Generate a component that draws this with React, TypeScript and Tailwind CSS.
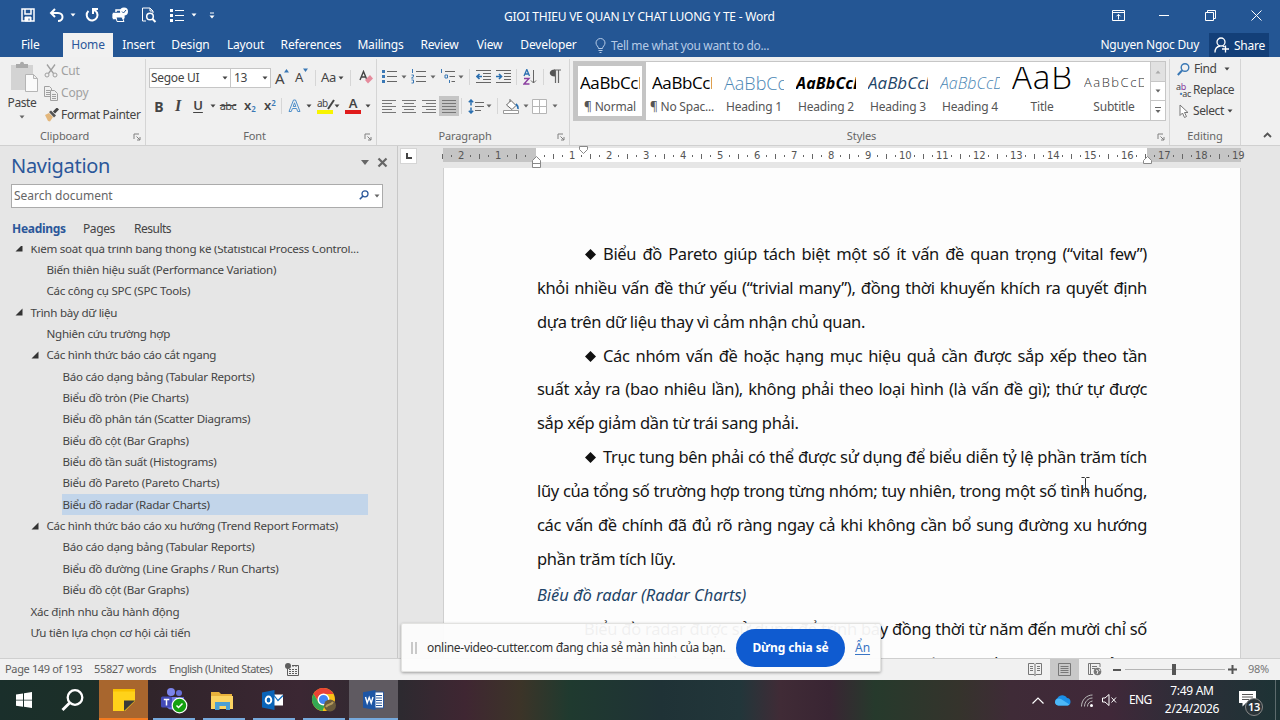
import type { ReactNode } from "react";
import clsx from "clsx";

const TABS = [
  { label: "Insert", cls: "w-[51px]" },
  { label: "Design", cls: "w-[53px]" },
  { label: "Layout", cls: "w-[57px]" },
  { label: "References", cls: "w-[74px]" },
  { label: "Mailings", cls: "w-[65px]" },
  { label: "Review", cls: "w-[53px]" },
  { label: "View", cls: "w-[47px]" },
  { label: "Developer", cls: "w-[71px]" },
];

const STYLES = [
  { label: "¶ Normal", sample: "AaBbCcDd", cls: "text-[17px] text-black tracking-[-0.4px]", active: true },
  { label: "¶ No Spac...", sample: "AaBbCcDd", cls: "text-[17px] text-black tracking-[-0.4px]" },
  { label: "Heading 1", sample: "AaBbCc", cls: "text-[18px] font-light text-[#4a86b4]" },
  { label: "Heading 2", sample: "AaBbCcD", cls: "text-[16px] font-bold italic text-black tracking-[0.1px]" },
  { label: "Heading 3", sample: "AaBbCcD", cls: "text-[17px] italic text-[#1f4568]" },
  { label: "Heading 4", sample: "AaBbCcDd", cls: "text-[16px] font-light italic text-[#4a86b4]" },
  { label: "Title", sample: "AaB", cls: "relative -top-[6px] text-[33px] font-light text-black leading-[36px] tracking-[1px]" },
  { label: "Subtitle", sample: "AaBbCcDd", cls: "text-[13px] font-light text-[#303030] tracking-[1.5px]" },
];

type Heading = { text: string; level: 1 | 2 | 3; open?: boolean; selected?: boolean };

const HEADINGS: Heading[] = [
  { text: "Kiểm soát quá trình bằng thống kê (Statistical Process Control...", level: 1, open: true },
  { text: "Biến thiên hiệu suất (Performance Variation)", level: 2 },
  { text: "Các công cụ SPC (SPC Tools)", level: 2 },
  { text: "Trình bày dữ liệu", level: 1, open: true },
  { text: "Nghiên cứu trường hợp", level: 2 },
  { text: "Các hình thức báo cáo cắt ngang", level: 2, open: true },
  { text: "Báo cáo dạng bảng (Tabular Reports)", level: 3 },
  { text: "Biểu đồ tròn (Pie Charts)", level: 3 },
  { text: "Biểu đồ phân tán (Scatter Diagrams)", level: 3 },
  { text: "Biểu đồ cột (Bar Graphs)", level: 3 },
  { text: "Biểu đồ tần suất (Histograms)", level: 3 },
  { text: "Biểu đồ Pareto (Pareto Charts)", level: 3 },
  { text: "Biểu đồ radar (Radar Charts)", level: 3, selected: true },
  { text: "Các hình thức báo cáo xu hướng (Trend Report Formats)", level: 2, open: true },
  { text: "Báo cáo dạng bảng (Tabular Reports)", level: 3 },
  { text: "Biểu đồ đường (Line Graphs / Run Charts)", level: 3 },
  { text: "Biểu đồ cột (Bar Graphs)", level: 3 },
  { text: "Xác định nhu cầu hành động", level: 1 },
  { text: "Ưu tiên lựa chọn cơ hội cải tiến", level: 1 },
];

const LINES = [
  { text: "Biểu đồ Pareto giúp tách biệt một số ít vấn đề quan trọng (“vital few”)", bullet: true, full: true },
  { text: "khỏi nhiều vấn đề thứ yếu (“trivial many”), đồng thời khuyến khích ra quyết định", full: true },
  { text: "dựa trên dữ liệu thay vì cảm nhận chủ quan." },
  { text: "Các nhóm vấn đề hoặc hạng mục hiệu quả cần được sắp xếp theo tần", bullet: true, full: true },
  { text: "suất xảy ra (bao nhiêu lần), không phải theo loại hình (là vấn đề gì); thứ tự được", full: true },
  { text: "sắp xếp giảm dần từ trái sang phải." },
  { text: "Trục tung bên phải có thể được sử dụng để biểu diễn tỷ lệ phần trăm tích", bullet: true, full: true },
  { text: "lũy của tổng số trường hợp trong từng nhóm; tuy nhiên, trong một số tình huống,", full: true },
  { text: "các vấn đề chính đã đủ rõ ràng ngay cả khi không cần bổ sung đường xu hướng", full: true },
  { text: "phần trăm tích lũy." },
];

function Icon({ w = 16, h = 16, className, children }: { w?: number; h?: number; className?: string; children: ReactNode }) {
  return (
    <svg width={w} height={h} viewBox={`0 0 ${w} ${h}`} fill="none" stroke="currentColor" className={clsx("shrink-0", className)}>
      {children}
    </svg>
  );
}

function Caret({ className }: { className?: string }) {
  return (
    <Icon w={6} h={4} className={className}>
      <path d="M0.5 0.5h5L3 3.5z" fill="currentColor" stroke="none" />
    </Icon>
  );
}

function Sep({ className }: { className?: string }) {
  return <div className={clsx("h-4 w-px shrink-0 bg-[#d6d6d6]", className)} />;
}

function Launcher() {
  return (
    <Icon w={8} h={8} className="text-[#808080]">
      <path d="M1 6V1h5M3.5 3.5L7 7M7 4v3H4" />
    </Icon>
  );
}

function Group({ label, className, launcher, children }: { label: string; className: string; launcher?: boolean; children: ReactNode }) {
  return (
    <section className={clsx("relative flex h-[86px] shrink-0 flex-col border-r border-[#d5d5d5]", className)}>
      <div className="h-[68px]">{children}</div>
      <div className="text-center text-[11px] leading-[18px] tracking-[-0.1px] text-[#666]">{label}</div>
      {launcher && (
        <div className="absolute right-[4px] bottom-[4px]">
          <Launcher />
        </div>
      )}
    </section>
  );
}

function TitleBar() {
  return (
    <header className="flex h-[33px] items-center pb-[3px] text-white">
      <div className="flex w-[230px] shrink-0 items-center pl-[21px]">
        <Icon w={14} h={14}>
          <path d="M1 1h12v12H1zM4 1v5h6V1" strokeWidth="1.5" />
          <path d="M4 9h6v4H4z" fill="currentColor" />
          <path d="M8 10.5v2" stroke="#245694" />
        </Icon>
        <Icon w={16} h={14} className="ml-[14px]">
          <path d="M6 1L2 5l4 4M2 5h7c6 0 6 8 0 8" strokeWidth="2" />
        </Icon>
        <Caret className="ml-[5px]" />
        <Icon w={16} h={16} className="ml-[8px]">
          <path d="M4.5 4a5.4 5.4 0 1 0 5-1.2M9 7V2h5" strokeWidth="2" />
        </Icon>
        <Icon w={17} h={16} className="ml-[12px]">
          <path d="M4 5V3h5M1.500 6.500h10v5h-10z" strokeWidth="1.5" />
          <path d="M1 7h11v4H1z" fill="currentColor" />
          <path d="M4 10h6l2 4.500H5z" fill="#245694" />
          <circle cx="12" cy="4.500" r="4" fill="currentColor" stroke="none" />
          <path d="M10 4.500l1.500 1.500L14 3" stroke="#245694" />
        </Icon>
        <Icon w={16} h={16} className="ml-[12px]">
          <path d="M5 14H1.500V1H9l3 3v2M9 1v3h3" />
          <circle cx="9" cy="9.500" r="3.300" strokeWidth="1.500" />
          <path d="M11.500 12l3 3" strokeWidth="2" />
        </Icon>
        <Icon w={16} h={15} className="ml-[12px]">
          <path d="M1 2.500h3M1 7.500h3M1 12.500h3" strokeWidth="3" />
          <path d="M6 2.500h9M6 7.500h9M6 12.500h9" />
        </Icon>
        <Caret className="ml-[6px]" />
        <Icon w={6} h={7} className="ml-[12px]">
          <path d="M1 1h4" />
          <path d="M.5 3.500h5L3 6.500z" fill="currentColor" stroke="none" />
        </Icon>
      </div>
      <div className="mt-[3px] ml-[274px] w-[275px] shrink-0 text-[12px] tracking-[-0.22px] whitespace-nowrap">
        GIOI THIEU VE QUAN LY CHAT LUONG Y TE - Word
      </div>
      <div className="ml-auto flex items-center pr-[18px]">
        <Icon w={13} h={11}>
          <path d="M.5.5h12v10H.5zM.5 2.500h12M6.500 9.500V4.500M4.500 6.300l2-2 2 2" />
        </Icon>
        <Icon w={10} h={10} className="ml-[34px]">
          <path d="M0 5.500h10" />
        </Icon>
        <Icon w={11} h={11} className="ml-[36px]">
          <path d="M.5 2.500h8v8h-8zM2.500 2.500v-2h8v8h-2" />
        </Icon>
        <Icon w={11} h={11} className="ml-[35px]">
          <path d="M.5.5l10 10M10.500.5l-10 10" />
        </Icon>
      </div>
    </header>
  );
}

function TabBar() {
  return (
    <nav className="flex h-6 text-[12px] leading-[23px] tracking-[-0.15px] text-white">
      <div className="w-[63px] pl-[21px]">File</div>
      <div className="w-[50px] bg-[#f1f1f1] text-center text-[#2b579a]">Home</div>
      <div className="flex">
        {TABS.map((t) => (
          <div key={t.label} className={clsx("text-center", t.cls)}>
            {t.label}
          </div>
        ))}
      </div>
      <div className="ml-[11px] flex items-center gap-[5px] text-[#b5cae6]">
        <Icon w={11} h={15}>
          <path d="M3.500 10.500C3.500 8.500 1 7.500 1 5a4.500 4.500 0 0 1 9 0c0 2.500-2.500 3.500-2.500 5.500zM3.500 12.500h4M4.500 14.500h2" />
        </Icon>
        <span className="tracking-[-0.33px]">Tell me what you want to do...</span>
      </div>
      <div className="ml-auto pr-[10px] tracking-[-0.25px]">Nguyen Ngoc Duy</div>
      <div className="mr-[11px] flex w-[60px] items-center gap-[4px] bg-[#133f78] pl-[5px] tracking-[-0.25px]">
        <Icon w={16} h={16}>
          <circle cx="7" cy="5" r="4" strokeWidth="1.300" />
          <path d="M1 15.500c0-4 2-6 5-6.500M8.500 9c1 .2 1.500.5 2 1M11.500 8.500v7M8 12h7" strokeWidth="1.300" />
        </Icon>
        Share
      </div>
    </nav>
  );
}

function AlignIcon({ rows }: { rows: [number, number][] }) {
  return (
    <Icon w={15} h={15} className="text-[#777]">
      {rows.map(([x, len], i) => (
        <path key={i} d={`M${x} ${i * 3 + 1.5}h${len}`} />
      ))}
    </Icon>
  );
}

function ClipboardGroup() {
  return (
    <Group label="Clipboard" className="w-[146px] pr-[16px]" launcher>
      <div className="flex pt-[2px]">
        <div className="flex w-[44px] shrink-0 flex-col items-center">
          <Icon w={30} h={34} className="ml-[4px]">
            <path d="M2 4h22v25H2z" fill="#d3d3d3" stroke="none" />
            <path d="M7 3h4c0-3 4-3 4 0h4v4H7z" fill="#aaa" stroke="none" />
            <path d="M16.500 13.500h8l4 4v13h-12zM24.500 13.500v4h4" fill="#fafafa" stroke="#b5b5b5" />
          </Icon>
          <span className="text-[12px] leading-[16px] tracking-[-0.4px] text-[#444]">Paste</span>
          <Caret className="mt-[4px] text-[#666]" />
        </div>
        <div className="flex flex-col gap-[2px] text-[12px] leading-[20px] whitespace-nowrap text-[#a0a0a0]">
          <div className="flex items-center gap-[3px] tracking-[-0.3px]">
            <Icon w={14} h={14}>
              <path d="M3 .5l6.500 9M11 .5l-6.500 9" strokeWidth="1.300" />
              <circle cx="3" cy="11" r="2" />
              <circle cx="11" cy="11" r="2" />
            </Icon>
            Cut
          </div>
          <div className="flex items-center gap-[3px] tracking-[-0.2px]">
            <Icon w={14} h={15}>
              <path d="M.5.5h5l2 2v8h-7zM2 4.500h4M2 6.500h4M2 8.500h4" />
              <path d="M6.500 4.500h4l3 3v7h-7z" fill="#eee" />
              <path d="M8 8.500h4M8 10.500h4M8 12.500h4" />
            </Icon>
            Copy
          </div>
          <div className="flex items-center gap-[2px] text-[#444]">
            <Icon w={15} h={14}>
              <path d="M1 7l4-2 4 4-3 4.500-2-.5z" fill="#e3b77c" stroke="none" />
              <path d="M5 4l2-1.500 5 5L10 9.500z" fill="#555" stroke="none" />
              <path d="M10 4.500l4-4" strokeWidth="3" />
            </Icon>
            <span className="tracking-[-0.35px]">Format Painter</span>
          </div>
        </div>
      </div>
    </Group>
  );
}

function FontGroup() {
  return (
    <Group label="Font" className="w-[231px] pl-[3px] pr-[16px]" launcher>
      <div className="-mr-4 flex flex-col text-[#444]">
        <div className="mt-[8px] flex h-[21px] items-center">
          <div className="flex h-[20px] w-[82px] shrink-0 items-center justify-between border border-[#c6c6c6] bg-white pr-[2px] pl-px text-[12px] tracking-[-0.3px]">
            Segoe UI
            <Caret />
          </div>
          <div className="-ml-px flex h-[20px] w-[41px] shrink-0 items-center justify-between border border-[#c6c6c6] bg-white pr-[2px] pl-[3px] text-[12px] tracking-[-0.4px]">
            13
            <Caret />
          </div>
          <div className="ml-[4px] flex w-[18px] items-start text-[15px] leading-[18px]">
            A
            <Icon w={5} h={4} className="-ml-px text-[#3a78b5]">
              <path d="M0 3.500L2.500 0 5 3.500z" fill="currentColor" stroke="none" />
            </Icon>
          </div>
          <div className="ml-[2px] flex w-[16px] items-start text-[13px] leading-[19px]">
            A
            <Icon w={5} h={4} className="text-[#3a78b5]">
              <path d="M0 .5h5L2.500 4z" fill="currentColor" stroke="none" />
            </Icon>
          </div>
          <Sep className="ml-[4px]" />
          <span className="ml-[5px] text-[13px] tracking-[-0.4px]">Aa</span>
          <Caret className="ml-[2px]" />
          <Sep className="ml-[6px]" />
          <Icon w={14} h={15} className="ml-[8px]">
            <path d="M1 10L4.500 1.500 8 10M2.500 7h4" strokeWidth="1.400" />
            <path d="M6 10l5-5 3 3.500-5 5z" fill="#e58b9c" stroke="none" />
          </Icon>
        </div>
        <div className="mt-[8px] flex h-[20px] items-center">
          <span className="ml-px w-[18px] text-center text-[14px] font-bold">B</span>
          <span className="w-[20px] text-center font-['Liberation_Serif'] text-[16px] font-bold italic">I</span>
          <span className="w-[20px] text-center text-[13px] font-semibold underline underline-offset-2">U</span>
          <Caret className="ml-[2px]" />
          <span className="w-[24px] text-center text-[11px] tracking-[-0.6px] line-through">abc</span>
          <span className="w-[20px] text-center text-[13px] font-semibold">
            x<sub className="text-[8px] text-[#3a78b5]">2</sub>
          </span>
          <span className="w-[20px] text-center text-[13px] font-semibold">
            x<sup className="text-[8px] text-[#3a78b5]">2</sup>
          </span>
          <Sep className="ml-px" />
          <Icon w={14} h={14} className="ml-[6px] text-[#4f8fca]">
            <path d="M1 12.500L5.500 1h2L12 12.500H9.700L8.600 9.500H4.400l-1.100 3zM5.200 7.500h2.600L6.500 3.800z" />
          </Icon>
          <Caret className="ml-[4px]" />
          <div className="ml-[5px] flex w-[18px] flex-col">
            <div className="flex h-[11px] items-start text-[10px] leading-[9px] tracking-[-0.5px]">
              ab
              <Icon w={8} h={11} className="-ml-px">
                <path d="M7 1L3 7l-2 3" strokeWidth="2" />
              </Icon>
            </div>
            <div className="h-[4px] w-[16px] bg-[#f8f400]" />
          </div>
          <Caret className="-ml-px" />
          <div className="ml-[5px] flex w-[16px] flex-col items-center">
            <span className="h-[12px] text-[13px] leading-[11px] font-semibold">A</span>
            <div className="h-[4px] w-[16px] bg-[#e01b1b]" />
          </div>
          <Caret className="ml-[4px]" />
        </div>
      </div>
    </Group>
  );
}

function ParagraphGroup() {
  return (
    <Group label="Paragraph" className="w-[193px] pr-[16px]" launcher>
      <div className="-mr-4 flex flex-col pl-[5px] text-[#666]">
        <div className="mt-[7px] flex h-[21px] items-center">
          <Icon w={15} h={15}>
            <path d="M0 2.500h3M0 7.500h3M0 12.500h3" stroke="#3a78b5" strokeWidth="3" />
            <path d="M5 2.500h10M5 7.500h10M5 12.500h10" />
          </Icon>
          <Caret className="ml-[4px]" />
          <Icon w={15} h={15} className="ml-[4px]">
            <path d="M1.500 0v4M.5 6h2v1.500L.5 9h2M.5 11h2v3h-2" stroke="#3a78b5" />
            <path d="M5 2.500h10M5 7.500h10M5 12.500h10" />
          </Icon>
          <Caret className="ml-[4px]" />
          <Icon w={16} h={15} className="ml-[4px]">
            <path d="M1.500 0v4M5 6h2.500v3H5zM9.500 11v3" stroke="#3a78b5" />
            <path d="M5 2.500h10M9.500 7.500H15M11.500 12.500H15" />
          </Icon>
          <Caret className="ml-[2px]" />
          <Sep className="ml-[5px]" />
          <Icon w={15} h={15} className="ml-[6px]">
            <path d="M0 1.500h15M7 4.500h8M7 7.500h8M7 10.500h8M0 13.500h15" />
            <path d="M6 7.500H1M3.500 5L1 7.500 3.500 10" stroke="#2a6fb0" strokeWidth="1.600" />
          </Icon>
          <Icon w={15} h={15} className="ml-[5px]">
            <path d="M0 1.500h15M8 4.500h7M8 7.500h7M8 10.500h7M0 13.500h15" />
            <path d="M0 7.500h5M3 5l2.500 2.500L3 10" stroke="#2a6fb0" strokeWidth="1.600" />
          </Icon>
          <Sep className="ml-[5px]" />
          <Icon w={14} h={16} className="ml-[6px]">
            <path d="M1 7l2.800-6.500L6.500 7M2 5h3.500" stroke="#2a6fb0" strokeWidth="1.300" />
            <path d="M1 9.500h5L1 15h5.500" stroke="#8b3fa0" strokeWidth="1.400" />
            <path d="M10.500 1v13M8 11.500l2.500 2.500L13 11.500" />
          </Icon>
          <Sep className="ml-[6px]" />
          <Icon w={12} h={15} className="ml-[5px]">
            <path d="M6 .5C-1 .5-1 7.500 6 7.500z" fill="#555" stroke="none" />
            <path d="M5 1h7M6.500 1v13M9.500 1v13" strokeWidth="1.200" />
          </Icon>
        </div>
        <div className="mt-[9px] flex h-[20px] items-center">
          <AlignIcon rows={[[0, 14], [0, 10], [0, 14], [0, 10], [0, 14]]} />
          <div className="ml-[5px]">
            <AlignIcon rows={[[0, 14], [2, 10], [0, 14], [2, 10], [0, 14]]} />
          </div>
          <div className="ml-[5px]">
            <AlignIcon rows={[[0, 14], [4, 10], [0, 14], [4, 10], [0, 14]]} />
          </div>
          <div className="ml-[2px] flex h-[20px] w-[20px] items-center justify-center bg-[#c5c5c5]">
            <AlignIcon rows={[[0, 14], [0, 14], [0, 14], [0, 14], [0, 14]]} />
          </div>
          <Sep className="ml-[2px]" />
          <Icon w={16} h={15} className="ml-[6px]">
            <path d="M7 3.500h9M7 7.500h9M7 11.500h6" />
            <path d="M3 1v5.500M3 8.500V14M.8 3.200L3 1l2.200 2.200M.8 11.800L3 14l2.200-2.200" stroke="#2a6fb0" strokeWidth="1.500" />
          </Icon>
          <Caret className="ml-[2px]" />
          <Sep className="ml-[5px]" />
          <Icon w={17} h={16} className="ml-[5px]">
            <path d="M3.500 7L8 2.500l5 5-4 4zM7 4V1" fill="#fff" />
            <path d="M13 6c2 2 2.500 3 2 5" stroke="#2a6fb0" strokeWidth="1.800" />
            <path d="M.5 12.500h15v3H.5z" fill="#fff" stroke="#999" />
          </Icon>
          <Caret className="ml-[3px]" />
          <Icon w={15} h={15} className="ml-[3px]">
            <path d="M.5.5h14v14H.5zM7.500 1v13M1 7.500h13" fill="#fff" stroke="#b5b5b5" />
          </Icon>
          <Caret className="ml-[5px]" />
        </div>
      </div>
    </Group>
  );
}

function StylesGroup() {
  return (
    <Group label="Styles" className="w-[600px] pr-[16px]" launcher>
      <div className="mt-[2px] ml-[3px] -mr-[12px] flex h-[60px] w-[593px] border border-[#c6c6c6] bg-white">
        {STYLES.map((s) => (
          <div
            key={s.label}
            className={clsx("flex w-[72px] shrink-0 flex-col px-[6px]", s.active && "outline-4 -outline-offset-4 outline-[#c5c5c5]")}
          >
            <div className="mt-[5px] flex h-[32px] items-center overflow-hidden">
              <span className={clsx("whitespace-nowrap font-['Open_Sans']", s.cls)}>{s.sample}</span>
            </div>
            <span className="-mx-[6px] text-center text-[12px] leading-[15px] tracking-[-0.2px] whitespace-nowrap text-[#555]">{s.label}</span>
          </div>
        ))}
        <div className="ml-auto flex w-[15px] flex-col divide-y divide-[#c6c6c6] border-l border-[#c6c6c6] text-[#666]">
          <div className="flex h-[20px] items-center justify-center bg-[#e1e1e1] text-[#aaa]">
            <Caret className="rotate-180" />
          </div>
          <div className="flex h-[19px] items-center justify-center">
            <Caret />
          </div>
          <div className="flex h-[19px] items-center justify-center">
            <Icon w={6} h={7}>
              <path d="M0 .5h6" />
              <path d="M.5 3h5L3 6z" fill="currentColor" stroke="none" />
            </Icon>
          </div>
        </div>
      </div>
    </Group>
  );
}

function EditingGroup() {
  return (
    <Group label="Editing" className="w-[71px]">
      <div className="flex flex-col gap-px pl-[7px] text-[12px] leading-[20px] tracking-[-0.4px] text-[#444]">
        <div className="flex items-center">
          <Icon w={13} h={13} className="mr-[4px] text-[#3a78b5]">
            <circle cx="8" cy="4.500" r="3.800" strokeWidth="1.400" />
            <path d="M5 7.500L.8 12" strokeWidth="2" />
          </Icon>
          Find
          <Caret className="ml-[7px]" />
        </div>
        <div className="flex items-center">
          <span className="-ml-px mr-[2px] flex w-[15px] flex-col text-[9px] leading-[7px] tracking-[-0.3px]">
            <span>
              a<span className="text-[#8b3fa0]">b</span>
            </span>
            <span className="text-right">
              <span className="text-[#3a78b5]">•</span>ac
            </span>
          </span>
          Replace
        </div>
        <div className="flex items-center">
          <Icon w={10} h={14} className="mr-[4px] ml-[2px] text-[#777]">
            <path d="M1 1v10.500l2.500-2.500 2 4.500 2-1-2-4H9z" fill="#fff" />
          </Icon>
          Select
          <Caret className="ml-[3px]" />
        </div>
      </div>
    </Group>
  );
}

function Ribbon() {
  return (
    <div className="flex h-[89px] border-b border-[#d0d0d0] bg-[#f0f0f0] pt-[2px] pb-px">
      <ClipboardGroup />
      <FontGroup />
      <ParagraphGroup />
      <StylesGroup />
      <EditingGroup />
      <div className="flex flex-1 items-end justify-end pr-[8px] pb-[6px]">
        <Icon w={9} h={6} className="text-[#555]">
          <path d="M1 5l3.500-3.500L8 5" strokeWidth="1.800" />
        </Icon>
      </div>
    </div>
  );
}

function NavigationPane() {
  return (
    <aside className="flex w-[398px] shrink-0 flex-col border-r border-[#c8c8c8] pt-px">
      <div className="flex h-[37px] items-center pr-[9px] pl-[11px]">
        <h2 className="text-[20px] leading-[38px] tracking-[-0.3px] text-[#2b579a]">Navigation</h2>
        <Icon w={8} h={5} className="mb-[6px] ml-auto text-[#666]">
          <path d="M0 0h8L4 5z" fill="currentColor" stroke="none" />
        </Icon>
        <Icon w={11} h={11} className="mb-[6px] ml-[8px] text-[#666]">
          <path d="M1.500 1.500l8 8M9.500 1.500l-8 8" strokeWidth="2.200" />
        </Icon>
      </div>
      <div className="ml-[11px] flex h-[24px] w-[372px] items-center border border-[#ababab] bg-white pr-[2px] pl-[2px] text-[12px] text-[#666]">
        Search document
        <Icon w={10} h={10} className="mb-[2px] ml-auto text-[#2b579a]">
          <circle cx="6" cy="3.800" r="3" strokeWidth="1.300" />
          <path d="M4 6L.8 9.300" strokeWidth="1.600" />
        </Icon>
        <Caret className="ml-[5px] text-[#666]" />
      </div>
      <div className="mt-[10px] flex h-[22px] items-center pl-[12px] text-[12px] text-[#444]">
        <span className="w-[71px] font-bold tracking-[-0.3px] text-[#2b579a]">Headings</span>
        <span className="w-[51px] tracking-[-0.4px]">Pages</span>
        <span className="tracking-[-0.5px]">Results</span>
      </div>
      <div className="mt-[6px] flex-1 overflow-hidden">
        <div className="-mt-[8.5px]">
          {HEADINGS.map((h, i) => (
            <div
              key={i}
              className={clsx(
                "flex h-[21.35px] items-center pr-[29px] text-[11.6px] tracking-[-0.26px] text-[#444]",
                h.level === 1 && "pl-[14px]",
                h.level === 2 && "pl-[30px]",
                h.level === 3 && "pl-[46px]",
              )}
            >
              <div className="w-[16px] shrink-0">
                {h.open && (
                  <Icon w={8} h={8} className="ml-px">
                    <path d="M7.500.5v7h-7z" fill="#333" stroke="none" />
                  </Icon>
                )}
              </div>
              <div className={clsx("flex-1 pl-[0.500px] leading-[21px] whitespace-nowrap", h.selected && "bg-[#c2d5ea]")}>{h.text}</div>
            </div>
          ))}
        </div>
      </div>
    </aside>
  );
}

// quarter-centimetre marks, 0 sits on the left margin
const MARKS = Array.from({ length: 87 }, (_, i) => i - 10);

function Ruler() {
  return (
    <div className="relative mt-[2px] ml-[44px] flex h-[14px] w-[798px] shrink-0">
      <div className="w-[93px] bg-[#c5c5c5]" />
      <div className="w-[611px] bg-white" />
      <div className="w-[94px] bg-[#c5c5c5]" />
      <div className="absolute top-[1px] left-[-5px] flex h-[14px] items-center text-[10px] text-[#555]">
        {MARKS.map((m) => (
          <div key={m} className="flex w-[9.25px] shrink-0 items-center justify-center">
            {m % 4 === 0 ? (
              m !== 0 && <span className="font-['DejaVu_Sans'] leading-[14px] tracking-[-0.2px]">{Math.abs(m / 4)}</span>
            ) : m % 2 === 0 ? (
              <span className="h-[5px] w-px bg-[#666]" />
            ) : (
              <span className="h-[2px] w-px bg-[#666]" />
            )}
          </div>
        ))}
      </div>
      <Icon w={9} h={8} className="absolute -top-[2px] left-[136px] text-[#888]">
        <path d="M.5.5h8v3L4.500 7.500.5 3.500z" fill="#fff" />
      </Icon>
      <Icon w={9} h={12} className="absolute top-[8px] left-[89px] text-[#888]">
        <path d="M4.500.5l4 4v7h-8v-7zM.5 7.500h8" fill="#fff" />
      </Icon>
      <Icon w={9} h={8} className="absolute top-[8px] left-[700px] text-[#888]">
        <path d="M4.500.5l4 4v3h-8v-3z" fill="#fff" />
      </Icon>
    </div>
  );
}

function Page() {
  return (
    <div className="relative mt-[6px] ml-[44px] h-[490px] w-[798px] overflow-hidden border-r border-l border-[#cfcfcf] bg-[#fdfdfd] pt-[69.5px] pr-[93px] pl-[93px] text-[16.5px] tracking-[-0.32px] text-[#151515]">
      {LINES.map((l, i) => (
        <div key={i} className={clsx("flex h-[33.87px] items-center", l.bullet && "pl-[48px]")}>
          {l.bullet && (
            <Icon w={11} h={11} className="mr-[7px]">
              <path d="M5.500 0L11 5.500 5.500 11 0 5.500z" fill="#111" stroke="none" />
            </Icon>
          )}
          <div className={clsx("flex-1 whitespace-nowrap", l.full && "[text-align-last:justify]")}>{l.text}</div>
        </div>
      ))}
      <div className="mt-[2px] leading-[34px] tracking-[-0.05px] text-[#1f4568] italic">Biểu đồ radar (Radar Charts)</div>
      <div className="pl-[47px] leading-[34px] whitespace-nowrap [text-align-last:justify]">
        Biểu đồ radar được sử dụng để trình bày đồng thời từ năm đến mười chỉ số
      </div>
      <div className="mt-[2px] leading-[34px] whitespace-nowrap [text-align-last:justify]">
        quan trọng, có thể so sánh với mục tiêu đã được nhất định bằng các mức chỉ tiêu
      </div>
      <Icon w={9} h={16} className="absolute top-[309px] left-[637px]">
        <path d="M.5.5h3l1 1 1-1h3M4.500 1.500v13M.5 15.500h3l1-1 1 1h3" stroke="#333" />
      </Icon>
    </div>
  );
}

function StatusBar() {
  return (
    <footer className="flex h-[22px] shrink-0 items-center border-t border-[#cfcfcf] bg-[#f1f1f1] text-[11px] text-[#5e5e5e]">
      <span className="w-[89px] pl-[5px] tracking-[-0.35px]">Page 149 of 193</span>
      <span className="w-[75px] pl-[5px] tracking-[-0.35px]">55827 words</span>
      <span className="w-[117px] pl-[5px] tracking-[-0.55px] whitespace-nowrap">English (United States)</span>
      <Icon w={14} h={14} className="ml-[4px]">
        <path d="M2.500 4v8.500h11V2.500H7" />
        <path d="M7 3h6M4 6.500h8M4 8.500h8M4 10.500h8" strokeDasharray="2 1" />
        <circle cx="3" cy="3" r="3" fill="currentColor" stroke="none" />
      </Icon>
      <div className="ml-auto flex h-full items-center text-[#777]">
        <Icon w={14} h={13}>
          <path d="M.5.5h5.500l1 1 1-1h5.500v11H8l-1 1-1-1H.5zM7 1.500v11M2 3.500h3M2 5.500h3M2 7.500h3M9 3.500h3M9 5.500h3M9 7.500h3" />
        </Icon>
        <div className="ml-[8px] flex h-full w-[29px] items-center justify-center bg-[#c8c8c8]">
          <Icon w={13} h={13}>
            <path d="M.5.5h12v12H.5zM2.500 3.500h8M2.500 5.500h8M2.500 7.500h8M2.500 9.500h8" />
          </Icon>
        </div>
        <Icon w={14} h={13} className="ml-[9px]">
          <path d="M12 4V.5H.5v11H5M2.500 1v10M4 3.500h5M4 5.500h3" />
          <circle cx="9.500" cy="8.500" r="3.800" fill="#777" stroke="none" />
          <path d="M8 7l2 1-1 3M11 6l1 2" stroke="#f1f1f1" />
        </Icon>
        <span className="ml-[11px] h-[2px] w-[8px] bg-[#555]" />
        <div className="relative ml-[4px] flex h-[12px] w-[100px] items-center">
          <div className="h-px w-full bg-[#b5b5b5]" />
          <div className="absolute left-[47px] h-[11px] w-[4px] bg-[#555]" />
        </div>
        <Icon w={9} h={9} className="ml-[3px] text-[#555]">
          <path d="M0 4.500h9M4.500 0v9" strokeWidth="2" />
        </Icon>
        <span className="w-[43px] pl-[11px] text-[11px] tracking-[-0.3px]">98%</span>
      </div>
    </footer>
  );
}

function TaskButton({ className = "w-[50px]", line, children }: { className?: string; line?: string; children: ReactNode }) {
  return (
    <div className={clsx("relative flex h-10 shrink-0 items-center justify-center", className)}>
      {children}
      {line && <div className={clsx("absolute bottom-0 h-[2px]", line)} />}
    </div>
  );
}

function Taskbar() {
  return (
    <div className="flex h-10 shrink-0 items-center bg-[linear-gradient(90deg,#1a2f2b_0px,#1c2f28_90px,#30242a_150px,#3b2733_300px,#2d2a30_400px,#3f2632_465px,#3c3428_520px,#1f3a2f_570px,#1f3236_660px,#22363a_740px,#402b36_780px,#392533_830px,#263a2c_875px,#35332c_960px,#3f2b37_1010px,#402839_1110px,#2c2e38_1190px,#1d3335_1280px)] text-white">
      <TaskButton className="w-[48px]">
        <Icon w={16} h={16}>
          <path d="M0 2.500l7-1v6.200H0zM8 1.300L16 0v7.700H8zM0 8.500h7v6.200l-7-1zM8 8.500h8V16l-8-1.200z" fill="#fff" stroke="none" />
        </Icon>
      </TaskButton>
      <TaskButton className="w-[51px]">
        <Icon w={24} h={24} className="mr-[4px]">
          <circle cx="15" cy="9.500" r="7.300" strokeWidth="2.300" />
          <path d="M9.500 15L2.500 22" strokeWidth="2.800" />
        </Icon>
      </TaskButton>
      <TaskButton className="w-[49px] bg-[#a8662e]" line="inset-x-0 bg-[#f47b20]">
        <Icon w={22} h={22}>
          <path d="M0 0h22v12L12 22H0z" fill="#ffd21a" stroke="none" />
          <path d="M0 0h22v2.500H0z" fill="#f8c000" stroke="none" />
          <path d="M11 11.500h11L11 22z" fill="#3a3a3a" stroke="none" />
        </Icon>
      </TaskButton>
      <TaskButton className="ml-px w-[50px]" line="inset-x-[4px] bg-[#76a9dc]">
        <Icon w={28} h={28}>
          <circle cx="11" cy="6" r="4" fill="#7b83eb" stroke="none" />
          <circle cx="19" cy="7" r="3" fill="#6870d8" stroke="none" />
          <path d="M6 11h11v7a5.500 5.500 0 0 1-11 0z" fill="#6f77e0" stroke="none" />
          <path d="M17 11h7v6h-7z" fill="#5059c9" stroke="none" />
          <rect x="1" y="10.500" width="11" height="11" rx="1.500" fill="#444bb8" stroke="none" />
          <path d="M3.800 13.500h5.500M6.500 13.500v6" strokeWidth="1.500" />
          <circle cx="19.500" cy="19.500" r="7.300" fill="#13a10e" stroke="#fff" strokeWidth="1.200" />
          <path d="M16.500 19.500l2 2 4-4" strokeWidth="1.500" />
        </Icon>
      </TaskButton>
      <TaskButton line="inset-x-[4px] bg-[#76a9dc]">
        <Icon w={22} h={19} className="mr-[4px]">
          <path d="M0 1h8l2 2h11v15H0z" fill="#e9b23c" stroke="none" />
          <path d="M0 5h22v13H0z" fill="#fcd462" stroke="none" />
          <path d="M4 11h15v8h-4v-4H8.500v4H4z" fill="#4a9fd4" stroke="none" />
        </Icon>
      </TaskButton>
      <TaskButton line="inset-x-[4px] bg-[#76a9dc]">
        <Icon w={22} h={20} className="mr-[2px]">
          <path d="M11 4.500h10v11H11z" fill="#fff" stroke="none" />
          <path d="M12 5.500l4 5 5-5" stroke="#0f6cbd" strokeWidth="1.200" />
          <path d="M0 2.500L12.500 0v20L0 17.500z" fill="#0a64b8" stroke="none" />
          <ellipse cx="6.500" cy="10" rx="2.800" ry="3.500" strokeWidth="1.900" />
        </Icon>
      </TaskButton>
      <TaskButton line="inset-x-[4px] bg-[#76a9dc]">
        <Icon w={26} h={26}>
          <circle cx="12.500" cy="12.500" r="11.500" fill="#fbc116" stroke="none" />
          <path d="M2.500 6.700a11.500 11.500 0 0 1 20 .300H12.500a5.500 5.500 0 0 0-5 8z" fill="#ea4335" stroke="none" />
          <path d="M2.500 6.700l5 8.600a5.500 5.500 0 0 0 6.500 2.400L11.500 24A11.500 11.500 0 0 1 2.500 6.700z" fill="#34a853" stroke="none" />
          <circle cx="12.500" cy="12.500" r="5.300" fill="#4285f4" stroke="#fff" strokeWidth="1.400" />
          <circle cx="19" cy="18.500" r="6" fill="#6a5b3c" stroke="none" />
          <path d="M15 20c2-4 5-1 7-5" stroke="#b59a5c" strokeWidth="2" />
        </Icon>
      </TaskButton>
      <TaskButton className="w-[49px] bg-[#5f5a61]" line="inset-x-0 bg-[#76a9dc]">
        <Icon w={21} h={20}>
          <path d="M11 2h9.500v16H11z" fill="#fff" stroke="#2b579a" />
          <path d="M13 5.500h6M13 8h6M13 10.500h6M13 13h6M13 15.500h6" stroke="#2b579a" />
          <path d="M0 2.300L12.500 0v20L0 17.700z" fill="#1e56a5" stroke="none" />
          <path d="M2.500 7l1.700 6L6.200 7.500 8.200 13l1.800-6" strokeWidth="1.400" />
        </Icon>
      </TaskButton>
      <div className="ml-auto flex h-full items-center">
        <Icon w={12} h={7}>
          <path d="M.5 6.500l5.500-5.500 5.500 5.500" strokeWidth="1.200" />
        </Icon>
        <Icon w={17} h={12} className="ml-[10px]">
          <path d="M4 11.500a4 4 0 0 1-.500-7.500A5.500 5.500 0 0 1 13 4a3.800 3.800 0 0 1 .5 7.500z" fill="#1a8fe8" stroke="none" />
          <path d="M1 9a4 4 0 0 1 6-4l8.500 5.500c-.5.700-1.300 1-2 1H4a4 4 0 0 1-3-2.500z" fill="#4db8f8" stroke="none" />
        </Icon>
        <Icon w={12} h={13} className="ml-[10px] text-[#bbb]">
          <path d="M.5 12.500c0-6.500 5-11.500 11-11.500M3.500 12.500c0-4.500 3.500-8.500 8-8.500M6.500 12.500c0-3 2-5 5-5.500" />
          <circle cx="10.500" cy="11.500" r="1.500" fill="#fff" stroke="none" />
        </Icon>
        <Icon w={15} h={12} className="ml-[9px]">
          <path d="M.5 4h2.500l4-3.500v11L3 8H.5zM9.500 3.500l4.500 5M14 3.500l-4.500 5" />
        </Icon>
        <span className="ml-[12px] w-[24px] text-[12px] tracking-[-0.6px]">ENG</span>
        <div className="ml-[10px] w-[58px] text-center text-[12px] leading-[18px] tracking-[-0.3px] whitespace-nowrap">
          <div>7:49 AM</div>
          <div>2/24/2026</div>
        </div>
        <div className="relative ml-[18px] h-[26px] w-[26px]">
          <Icon w={17} h={17} className="mt-[3px]">
            <path d="M0 1h17v12H7l-3.500 3.500V13H0z" fill="#fff" stroke="none" />
            <path d="M3 4.500h11M3 7h11M3 9.500h7" stroke="#555" />
          </Icon>
          <div className="absolute top-[11px] left-[6px] flex h-[18px] w-[18px] items-center justify-center rounded-full border border-[#888] bg-[#2a3438] text-[11px] font-semibold tracking-[-0.4px]">
            13
          </div>
        </div>
        <div className="ml-[10px] h-full w-px bg-[#5d6b6d]" />
        <div className="w-[4px]" />
      </div>
    </div>
  );
}

function SharePrompt() {
  return (
    <div className="absolute top-[623px] left-[401px] flex h-[49px] w-[480px] items-center rounded-[2px] border border-[#e2e2e0] bg-[#fcfcfc]/95 text-[12px] shadow-[0_1px_3px_rgba(0,0,0,0.35)]">
      <div className="ml-[9px] flex h-[12px] w-[6px] justify-between">
        <span className="w-[2px] bg-[#c9c9c9]" />
        <span className="w-[2px] bg-[#c9c9c9]" />
      </div>
      <span className="ml-[10px] w-[309px] tracking-[-0.29px] whitespace-nowrap text-[#333]">
        online-video-cutter.com đang chia sẻ màn hình của bạn.
      </span>
      <button className="flex h-[38px] w-[109px] items-center justify-center rounded-full bg-[#0f5bd0] text-[12px] font-bold tracking-[-0.1px] text-white">
        Dừng chia sẻ
      </button>
      <a className="ml-[10px] text-[#3a75c4] underline underline-offset-2">Ẩn</a>
    </div>
  );
}

export default function App() {
  return (
    <div className="relative flex h-[720px] w-[1280px] flex-col overflow-hidden bg-[#e6e6e6] font-['Noto_Sans',sans-serif]">
      <div className="shrink-0 bg-[#245694]">
        <TitleBar />
        <TabBar />
      </div>
      <Ribbon />
      <div className="flex h-[512px] shrink-0">
        <NavigationPane />
        <main className="relative flex flex-1 flex-col overflow-hidden pl-px">
          <Ruler />
          <Page />
          <div className="absolute top-[2px] left-[2px] flex h-[16px] w-[17px] items-center justify-center border border-[#d5d5d5] bg-white">
            <Icon w={6} h={6}>
              <path d="M1 0v5h5" stroke="#444" strokeWidth="2" />
            </Icon>
          </div>
        </main>
      </div>
      <StatusBar />
      <Taskbar />
      <SharePrompt />
    </div>
  );
}
